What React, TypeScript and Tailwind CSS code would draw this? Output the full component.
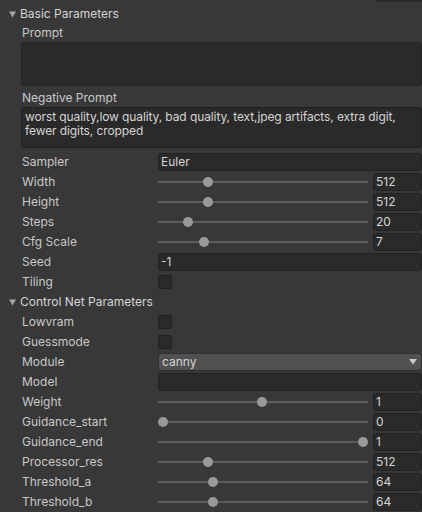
import React from "react";

const font = { fontFamily: "Inter, 'Noto Sans', sans-serif" };

function Header({ title }: { title: string }) {
  return (
    <div className="flex h-5 items-center">
      <div className="w-[20px] shrink-0 pl-[9px]">
        <svg width="7" height="7" viewBox="0 0 7 7">
          <polygon points="0,0.5 7,0.5 3.5,6.5" fill="#a3a3a3" />
        </svg>
      </div>
      <span className="text-[12px] text-[#d4d4d4]">{title}</span>
    </div>
  );
}

function Label({ text }: { text: string }) {
  return (
    <div className="w-[158px] shrink-0 pl-[22px] text-[12px] text-[#c8c8c8] whitespace-nowrap">
      {text}
    </div>
  );
}

function Row({ label, children }: { label: string; children?: React.ReactNode }) {
  return (
    <div className="flex h-5 items-center">
      <Label text={label} />
      <div className="flex min-w-0 flex-1 items-center">{children}</div>
    </div>
  );
}

function Field({ value }: { value: string }) {
  return (
    <div className="flex h-[18px] flex-1 items-center rounded-[3px] border border-[#212121] bg-[#2a2a2a] pl-[2px] text-[12px] text-[#d4d4d4]">
      {value}
    </div>
  );
}

function Slider({ label, pos, value }: { label: string; pos: number; value: string }) {
  return (
    <Row label={label}>
      <div className="relative h-[18px] w-[210px] shrink-0">
        <div className="absolute left-0 right-0 top-[8px] h-[2px] bg-[#5e5e5e]" />
        <div
          className="absolute top-[4px] h-[10px] w-[10px] rounded-full bg-[#999999]"
          style={{ left: pos - 163 }}
        />
      </div>
      <div className="ml-[5px] flex h-[18px] flex-1 items-center rounded-[3px] border border-[#212121] bg-[#2a2a2a] pl-[2px] text-[12px] text-[#d4d4d4]">
        {value}
      </div>
    </Row>
  );
}

function Check({ label }: { label: string }) {
  return (
    <Row label={label}>
      <div className="h-[14px] w-[14px] rounded-[2px] border border-[#212121] bg-[#2a2a2a]" />
    </Row>
  );
}

export default function App() {
  return (
    <div className="h-[512px] w-[422px] overflow-hidden bg-[#383838]" style={font}>
      <div className="flex h-[4px] justify-end">
        <div className="h-[2px] w-[46px] bg-[#2a2a2a]" />
      </div>
      <Header title="Basic Parameters" />
      <div className="flex h-[18px] items-center pl-[22px] text-[12px] text-[#c8c8c8]">Prompt</div>
      <div className="ml-[21px] h-[44px] rounded-[3px] border border-[#212121] bg-[#2a2a2a]" />
      <div className="mt-[2px] flex h-[19px] items-center pl-[22px] text-[12px] text-[#c8c8c8]">
        Negative Prompt
      </div>
      <div className="ml-[21px] h-[41px] rounded-[3px] border border-[#212121] bg-[#2a2a2a] px-[3px] pt-[2px] text-[12px] leading-[14px] tracking-[-0.1px] text-[#d4d4d4]">
        worst quality,low quality, bad quality, text,jpeg artifacts, extra digit, fewer digits, cropped
      </div>
      <div className="h-[4px]" />
      <Row label="Sampler">
        <Field value="Euler" />
      </Row>
      <Slider label="Width" pos={208} value="512" />
      <Slider label="Height" pos={208} value="512" />
      <Slider label="Steps" pos={188} value="20" />
      <Slider label="Cfg Scale" pos={204} value="7" />
      <Row label="Seed">
        <Field value="-1" />
      </Row>
      <Check label="Tiling" />
      <Header title="Control Net Parameters" />
      <Check label="Lowvram" />
      <Check label="Guessmode" />
      <Row label="Module">
        <div className="flex h-[18px] flex-1 items-center justify-between rounded-[3px] border border-[#303030] bg-[#515151] pl-[3px] pr-[4px] text-[12px] text-[#d4d4d4]">
          <span>canny</span>
          <svg width="8" height="6" viewBox="0 0 8 6">
            <polygon points="0,0 8,0 4,5.5" fill="#c8c8c8" />
          </svg>
        </div>
      </Row>
      <Row label="Model">
        <Field value="" />
      </Row>
      <Slider label="Weight" pos={262} value="1" />
      <Slider label="Guidance_start" pos={163} value="0" />
      <Slider label="Guidance_end" pos={363} value="1" />
      <Slider label="Processor_res" pos={208} value="512" />
      <Slider label="Threshold_a" pos={213} value="64" />
      <Slider label="Threshold_b" pos={213} value="64" />
    </div>
  );
}
